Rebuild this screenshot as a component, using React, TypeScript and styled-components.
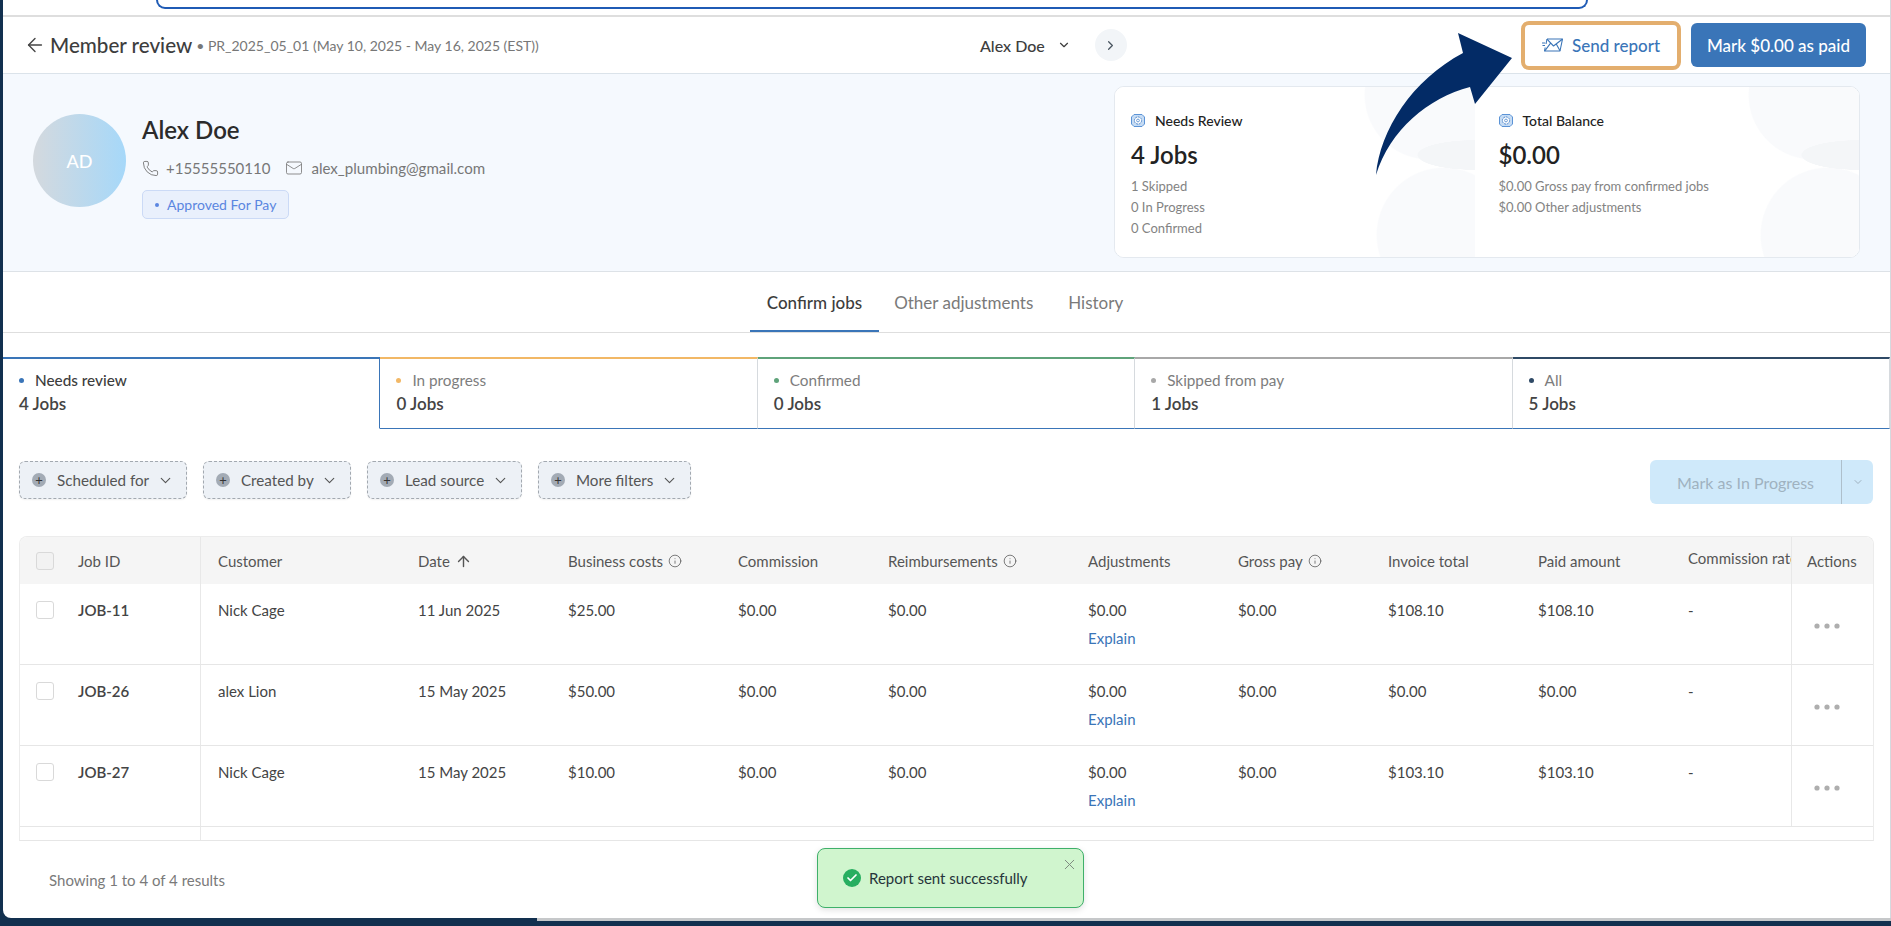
import React from 'react';
import styled, { createGlobalStyle } from 'styled-components';
import { ArrowLeft, ArrowUp, Check, ChevronDown, ChevronRight, Info, Mail, Phone, X } from 'lucide-react';

const GlobalStyle = createGlobalStyle`
  html, body { margin: 0; padding: 0; height: 100%; overflow: hidden; }
  body { font-family: Lato, "Liberation Sans", sans-serif; color: #444; background: #12304f; }
  * { box-sizing: border-box; }
`;

const Page = styled.div`
  position: relative;
  display: flex;
  flex-direction: column;
  width: 1891px;
  height: 926px;
  padding: 0 0 5px 3px;
  background: #12304f;
  overflow: hidden;
`;

const Panel = styled.main`
  position: relative;
  flex: 1;
  min-height: 0;
  background: #fff;
  border-right: 1px solid #d5d9de;
  border-bottom-left-radius: 8px;
  overflow: hidden;
`;

const WindowEdge = styled.div`
  height: 3px;
  margin-left: 534px;
  background: #c6c8ca;
`;

const TopStrip = styled.div`
  height: 17px;
  border-bottom: 2px solid #dedede;
  padding-left: 153px;
`;

const AddressBar = styled.div`
  width: 1432px;
  height: 9px;
  border: 2px solid #1f5bb5;
  border-top: 0;
  border-radius: 0 0 14px 14px;
`;

const Header = styled.header`
  display: flex;
  align-items: center;
  height: 57px;
  padding: 0 24px 0 21px;
  border-bottom: 1px solid #dbe3ea;
`;

const HeaderLeft = styled.div`
  display: flex;
  align-items: center;
  width: 956px;
  color: #444;
`;

const Title = styled.h1`
  margin: 0 0 0 4px;
  font-size: 20.6px;
  font-weight: 500;
  color: #3d3d3d;
`;

const Period = styled.span`
  margin-left: 4px;
  font-size: 14px;
  color: #777;
`;

const MemberPick = styled.div`
  display: flex;
  align-items: center;
  font-size: 16px;
  font-weight: 500;
  color: #3d3d3d;
`;

const MemberCaret = styled(ChevronDown)`
  margin-left: 12px;
`;

const NextButton = styled.span`
  display: flex;
  align-items: center;
  justify-content: center;
  width: 32px;
  height: 32px;
  margin-left: 24px;
  border-radius: 50%;
  background: #f2f5f8;
  color: #4a5560;
`;

const HeaderActions = styled.div`
  display: flex;
  align-items: center;
  gap: 10px;
  margin-left: auto;
`;

const SendButton = styled.button`
  display: flex;
  align-items: center;
  justify-content: center;
  gap: 9px;
  width: 160px;
  height: 49px;
  padding: 0;
  border: 4px solid #e3ae6e;
  border-radius: 8px;
  background: #fff;
  color: #3a75b8;
  font: 500 17px Lato, sans-serif;
`;

const PayButton = styled.button`
  width: 175px;
  height: 44px;
  padding: 0;
  border: 0;
  border-radius: 6px;
  background: #3a75b8;
  color: #fff;
  font: 500 17px Lato, sans-serif;
`;

const CurvedArrow = styled.svg`
  position: absolute;
  left: 1373px;
  top: 33px;
  pointer-events: none;
  z-index: 3;
`;

const Profile = styled.section`
  display: flex;
  height: 198px;
  padding: 12px 30px 0 30px;
  background: #f5f9fe;
  border-bottom: 1px solid #dde2e7;
`;

const Avatar = styled.div`
  display: flex;
  align-items: center;
  justify-content: center;
  width: 93px;
  height: 93px;
  margin-top: 28px;
  border-radius: 50%;
  background: linear-gradient(90deg, #d4d9de, #a6d8f9);
  color: #fff;
  font-size: 18px;
  font-weight: 500;
`;

const Identity = styled.div`
  margin: 29px 0 0 16px;
`;

const Name = styled.h2`
  margin: 0;
  font-size: 24px;
  line-height: 30px;
  font-weight: 600;
  color: #2b2b2b;
`;

const ContactRow = styled.div`
  display: flex;
  align-items: center;
  margin-top: 13px;
  font-size: 15px;
  line-height: 20px;
  color: #777;
`;

const ContactText = styled.span`
  margin: 0 15px 0 7px;
  &:last-child { margin-left: 8px; font-size: 15.1px; }
`;

const Pill = styled.div`
  display: inline-flex;
  align-items: center;
  gap: 8px;
  height: 29px;
  margin-top: 12px;
  padding: 0 12px;
  border: 1px solid #cbdaf6;
  border-radius: 5px;
  background: #e9f0fc;
  color: #5b86e0;
  font-size: 14px;
`;

const PillDot = styled.span`
  width: 4px;
  height: 4px;
  border-radius: 50%;
  background: #5b86e0;
`;

const Summary = styled.div`
  display: flex;
  width: 746px;
  height: 172px;
  margin-left: auto;
  border: 1px solid #e4e9ef;
  border-radius: 10px;
  background: #fff;
  overflow: hidden;
`;

const SummaryCard = styled.div<{ $wide?: boolean }>`
  width: ${p => (p.$wide ? 385 : 360)}px;
  padding: 21px 0 0 ${p => (p.$wide ? 24 : 16)}px;
  background:
    radial-gradient(ellipse 58px 15px at 100% 68px, #f4f6f8 98%, transparent 100%),
    radial-gradient(circle 65px at calc(100% - 46px) 8px, #f9fafc 98%, transparent 100%),
    radial-gradient(circle 68px at calc(100% - 31px) 148px, #f9fafc 98%, transparent 100%),
    #fff;
`;

const CardLabel = styled.div`
  display: flex;
  align-items: center;
  gap: 10px;
  height: 20px;
  margin-top: 2px;
  font-size: 14px;
  font-weight: 500;
  color: #222;
`;

const CardValue = styled.div`
  margin-top: 10px;
  font-size: 24px;
  line-height: 30px;
  font-weight: 600;
  color: #222;
`;

const CardNote = styled.div`
  font-size: 13px;
  line-height: 21px;
  color: #838383;
  &:nth-child(3) { margin-top: 6px; }
`;

const PageTabs = styled.nav`
  display: flex;
  justify-content: center;
  height: 61px;
  padding-right: 5px;
  border-bottom: 1px solid #dedede;
`;

const PageTab = styled.a<{ $active?: boolean }>`
  display: flex;
  align-items: center;
  height: 60px;
  padding: 2px ${p => (p.$active ? 17 : 15)}px 0;
  border-bottom: 2px solid ${p => (p.$active ? '#3a75b8' : 'transparent')};
  font-size: 17px;
  font-weight: ${p => (p.$active ? 500 : 400)};
  color: ${p => (p.$active ? '#3d3d3d' : '#7a7a7a')};
  &:last-child { padding-left: 20px; }
`;

const StatusTabs = styled.div`
  display: grid;
  grid-template-columns: repeat(5, 1fr);
  margin-top: 24px;
`;

const StatusTab = styled.div<{ $color: string; $active?: boolean }>`
  height: 72px;
  padding: 11px 16px 0;
  border-top: 2px solid ${p => p.$color};
  border-right: 1px solid ${p => (p.$active ? '#3a75b8' : '#d6dade')};
  border-bottom: 1px solid ${p => (p.$active ? 'transparent' : '#3a75b8')};
`;

const StatusLabel = styled.div<{ $active?: boolean }>`
  display: flex;
  align-items: center;
  gap: 11px;
  font-size: 15.3px;
  line-height: 20px;
  font-weight: ${p => (p.$active ? 500 : 400)};
  color: ${p => (p.$active ? '#3d3d3d' : '#7d7d7d')};
`;

const StatusDot = styled.span<{ $color: string }>`
  width: 5px;
  height: 5px;
  border-radius: 50%;
  background: ${p => p.$color};
`;

const StatusCount = styled.div`
  margin-top: 4px;
  font-size: 17px;
  line-height: 20px;
  font-weight: 600;
  color: #444;
`;

const Toolbar = styled.div`
  display: flex;
  align-items: flex-start;
  gap: 16px;
  height: 107px;
  padding: 32px 16px 0;
`;

const FilterChip = styled.button<{ $w: number }>`
  display: flex;
  align-items: center;
  width: ${p => p.$w}px;
  height: 38px;
  padding: 0 12px;
  border: 1px dashed #a3a9b0;
  border-radius: 6px;
  background: #edf1f6;
  box-shadow: 0 1px 2px rgba(0, 0, 0, 0.06);
  color: #555;
  font: 400 15.2px Lato, sans-serif;
`;

const PlusDot = styled.span`
  display: flex;
  align-items: center;
  justify-content: center;
  width: 14px;
  height: 14px;
  margin-right: 11px;
  border-radius: 50%;
  background: #a3abb5;
  color: #333;
  font-size: 13px;
  line-height: 14px;
`;

const ChipCaret = styled(ChevronDown)`
  margin-left: auto;
  color: #555;
`;

const BulkButton = styled.div`
  display: flex;
  height: 44px;
  margin: -1px 1px 0 auto;
  width: 223px;
  border-radius: 6px;
  background: #cfe9fa;
  color: #9fb2c0;
  font-size: 16px;
`;

const BulkLabel = styled.span`
  display: flex;
  align-items: center;
  justify-content: center;
  flex: 1;
`;

const BulkCaret = styled.span`
  display: flex;
  align-items: center;
  justify-content: center;
  width: 32px;
  border-left: 1px solid #aebfcb;
`;

const TableWrap = styled.div`
  width: 1855px;
  height: 305px;
  margin-left: 16px;
  border: 1px solid #ececec;
  border-bottom-color: #e6e6e6;
  border-radius: 8px 8px 0 0;
  overflow: hidden;
`;

const COLUMNS = '181px 200px 150px 170px 150px 200px 150px 150px 150px 150px 120px 1fr';

const Row = styled.div<{ $head?: boolean; $h: number }>`
  display: grid;
  grid-template-columns: ${COLUMNS};
  height: ${p => p.$h}px;
  background: ${p => (p.$head ? '#f5f5f5' : '#fff')};
  border-bottom: ${p => (p.$head ? '0' : '1px solid #e6e6e6')};
  font-size: 15px;
  line-height: 20px;
  color: ${p => (p.$head ? '#555' : '#444')};
`;

const Cell = styled.div<{ $head?: boolean }>`
  display: flex;
  flex-direction: column;
  align-items: flex-start;
  padding: ${p => (p.$head ? 14 : 16)}px 0 0 17px;
  white-space: nowrap;
  overflow: hidden;
`;

const HeadInner = styled.span`
  display: flex;
  align-items: center;
  gap: 5px;
`;

const ClippedHead = styled(Cell)`
  padding-top: 11px;
`;

const FirstCell = styled.div<{ $head?: boolean }>`
  display: flex;
  align-items: flex-start;
  gap: 24px;
  padding: ${p => (p.$head ? 15 : 17)}px 0 0 16px;
  border-right: 1px solid #e8e8e8;
  font-weight: ${p => (p.$head ? 400 : 600)};
`;

const JobId = styled.span`
  margin-top: -1px;
`;

const CheckBox = styled.span<{ $head?: boolean }>`
  flex: none;
  width: 18px;
  height: 18px;
  border: 1px solid #d9d9d9;
  border-radius: 3px;
  background: ${p => (p.$head ? '#f2f2f2' : '#fff')};
`;

const ActionCell = styled.div<{ $head?: boolean }>`
  padding: ${p => (p.$head ? '14px 0 0 15px' : '29px 0 0 22px')};
  border-left: 1px solid #e8e8e8;
  color: #555;
`;

const Explain = styled.a`
  margin-top: 8px;
  color: #3a75b8;
  font-size: 15px;
`;

const Footer = styled.footer`
  display: flex;
  align-items: center;
  height: 78px;
  padding-left: 46px;
  font-size: 15px;
  color: #7a7a7a;
`;

const Toast = styled.div`
  position: absolute;
  left: 814px;
  top: 848px;
  display: flex;
  align-items: center;
  gap: 8px;
  width: 267px;
  height: 60px;
  padding-left: 25px;
  border: 1px solid #3fb06a;
  border-radius: 8px;
  background: #d0f5ce;
  box-shadow: 0 2px 6px rgba(0, 0, 0, 0.12);
  color: #26343a;
  font-size: 15px;
`;

const ToastTick = styled.span`
  display: flex;
  align-items: center;
  justify-content: center;
  width: 18px;
  height: 18px;
  border-radius: 50%;
  background: #27ae60;
  color: #fff;
`;

const ToastClose = styled(X)`
  position: absolute;
  right: 5px;
  top: 7px;
  color: #7d8a80;
`;

const FlyingMail = () => (
  <svg width="21" height="14" viewBox="0 0 21 14" fill="none" stroke="#3a75b8" strokeWidth="1.1" strokeLinejoin="round">
    <path d="M5 1H20.5L18 13H2.5L3.2 9.5M4 6L5 1" />
    <path d="M5 1.2 11.5 8 20.3 1.2M2.8 12.8 8.6 5.2M18 12.8 14 5.6" />
    <path d="M0 5H3M0.5 7.5H3" />
  </svg>
);

const CardIcon = () => (
  <svg width="14" height="13" viewBox="0 0 14 13" fill="none">
    <path d="M3 .5H11L13.5 3V10L11 12.5H3L.5 10V3Z" fill="#c6dcf4" stroke="#5b93d6" />
    <circle cx="7" cy="6.5" r="3.6" fill="#fff" stroke="#4d86cc" strokeDasharray="2 .7" />
    <circle cx="7" cy="6.5" r="1.4" fill="#fff" stroke="#4d86cc" strokeWidth="0.8" />
  </svg>
);

const Dots = () => (
  <svg width="26" height="6" viewBox="0 0 26 6" fill="#aeaeae">
    <circle cx="3" cy="3" r="2.6" />
    <circle cx="13" cy="3" r="2.6" />
    <circle cx="23" cy="3" r="2.6" />
  </svg>
);

const statusTabs = [
  { label: 'Needs review', count: '4 Jobs', color: '#3a75b8', dot: '#3a75b8', active: true },
  { label: 'In progress', count: '0 Jobs', color: '#f2b866', dot: '#f2b866' },
  { label: 'Confirmed', count: '0 Jobs', color: '#5fa37a', dot: '#5fa37a' },
  { label: 'Skipped from pay', count: '1 Jobs', color: '#a8a8a8', dot: '#a8a8a8' },
  { label: 'All', count: '5 Jobs', color: '#2f4a66', dot: '#2f4a66' },
];

const filters = [
  { label: 'Scheduled for', w: 168 },
  { label: 'Created by', w: 148 },
  { label: 'Lead source', w: 155 },
  { label: 'More filters', w: 153 },
];

const jobs = [
  { id: 'JOB-11', customer: 'Nick Cage', date: '11 Jun 2025', costs: '$25.00', invoice: '$108.10', paid: '$108.10' },
  { id: 'JOB-26', customer: 'alex Lion', date: '15 May 2025', costs: '$50.00', invoice: '$0.00', paid: '$0.00' },
  { id: 'JOB-27', customer: 'Nick Cage', date: '15 May 2025', costs: '$10.00', invoice: '$103.10', paid: '$103.10' },
];

function App() {
  return (
    <Page>
      <GlobalStyle />
      <Panel>
        <TopStrip>
          <AddressBar />
        </TopStrip>

        <Header>
          <HeaderLeft>
            <ArrowLeft size={22} strokeWidth={1.5} />
            <Title>Member review</Title>
            <Period>• PR_2025_05_01 (May 10, 2025 - May 16, 2025 (EST))</Period>
          </HeaderLeft>
          <MemberPick>
            Alex Doe
            <MemberCaret size={14} />
          </MemberPick>
          <NextButton>
            <ChevronRight size={15} />
          </NextButton>
          <HeaderActions>
            <SendButton>
              <FlyingMail />
              Send report
            </SendButton>
            <PayButton>Mark $0.00 as paid</PayButton>
          </HeaderActions>
        </Header>

        <Profile>
          <Avatar>AD</Avatar>
          <Identity>
            <Name>Alex Doe</Name>
            <ContactRow>
              <Phone size={17} strokeWidth={1.3} />
              <ContactText>+15555550110</ContactText>
              <Mail size={18} strokeWidth={1.1} />
              <ContactText>alex_plumbing@gmail.com</ContactText>
            </ContactRow>
            <Pill>
              <PillDot />
              Approved For Pay
            </Pill>
          </Identity>
          <Summary>
            <SummaryCard>
              <CardLabel><CardIcon />Needs Review</CardLabel>
              <CardValue>4 Jobs</CardValue>
              <CardNote>1 Skipped</CardNote>
              <CardNote>0 In Progress</CardNote>
              <CardNote>0 Confirmed</CardNote>
            </SummaryCard>
            <SummaryCard $wide>
              <CardLabel><CardIcon />Total Balance</CardLabel>
              <CardValue>$0.00</CardValue>
              <CardNote>$0.00 Gross pay from confirmed jobs</CardNote>
              <CardNote>$0.00 Other adjustments</CardNote>
            </SummaryCard>
          </Summary>
        </Profile>

        <PageTabs>
          <PageTab $active>Confirm jobs</PageTab>
          <PageTab>Other adjustments</PageTab>
          <PageTab>History</PageTab>
        </PageTabs>

        <StatusTabs>
          {statusTabs.map(tab => (
            <StatusTab key={tab.label} $color={tab.color} $active={tab.active}>
              <StatusLabel $active={tab.active}>
                <StatusDot $color={tab.dot} />
                {tab.label}
              </StatusLabel>
              <StatusCount>{tab.count}</StatusCount>
            </StatusTab>
          ))}
        </StatusTabs>

        <Toolbar>
          {filters.map(filter => (
            <FilterChip key={filter.label} $w={filter.w}>
              <PlusDot>+</PlusDot>
              {filter.label}
              <ChipCaret size={17} strokeWidth={1.6} />
            </FilterChip>
          ))}
          <BulkButton>
            <BulkLabel>Mark as In Progress</BulkLabel>
            <BulkCaret><ChevronDown size={12} /></BulkCaret>
          </BulkButton>
        </Toolbar>

        <TableWrap>
          <Row $head $h={47}>
            <FirstCell $head>
              <CheckBox $head />
              <JobId>Job ID</JobId>
            </FirstCell>
            <Cell $head>Customer</Cell>
            <Cell $head><HeadInner>Date <ArrowUp size={17} strokeWidth={2} /></HeadInner></Cell>
            <Cell $head><HeadInner>Business costs <Info size={14} strokeWidth={1.3} /></HeadInner></Cell>
            <Cell $head>Commission</Cell>
            <Cell $head><HeadInner>Reimbursements <Info size={14} strokeWidth={1.3} /></HeadInner></Cell>
            <Cell $head>Adjustments</Cell>
            <Cell $head><HeadInner>Gross pay <Info size={14} strokeWidth={1.3} /></HeadInner></Cell>
            <Cell $head>Invoice total</Cell>
            <Cell $head>Paid amount</Cell>
            <ClippedHead $head>Commission rate</ClippedHead>
            <ActionCell $head>Actions</ActionCell>
          </Row>
          {jobs.map(job => (
            <Row key={job.id} $h={81}>
              <FirstCell>
                <CheckBox />
                <JobId>{job.id}</JobId>
              </FirstCell>
              <Cell>{job.customer}</Cell>
              <Cell>{job.date}</Cell>
              <Cell>{job.costs}</Cell>
              <Cell>$0.00</Cell>
              <Cell>$0.00</Cell>
              <Cell>
                $0.00
                <Explain>Explain</Explain>
              </Cell>
              <Cell>$0.00</Cell>
              <Cell>{job.invoice}</Cell>
              <Cell>{job.paid}</Cell>
              <Cell>-</Cell>
              <ActionCell><Dots /></ActionCell>
            </Row>
          ))}
          <Row $h={30}>
            <FirstCell />
          </Row>
        </TableWrap>

        <Footer>Showing 1 to 4 of 4 results</Footer>

        <Toast>
          <ToastTick><Check size={12} strokeWidth={3.5} /></ToastTick>
          Report sent successfully
          <ToastClose size={17} strokeWidth={1.4} />
        </Toast>

        <CurvedArrow width="140" height="145" viewBox="1376 33 140 145">
          <path
            d="M1376 175C1380 130 1412 80 1463 53L1458 33L1512 58L1475 104L1470 87C1428 98 1390 130 1376 175Z"
            fill="#032b66"
          />
        </CurvedArrow>
      </Panel>
      <WindowEdge />
    </Page>
  );
}

export default App;
